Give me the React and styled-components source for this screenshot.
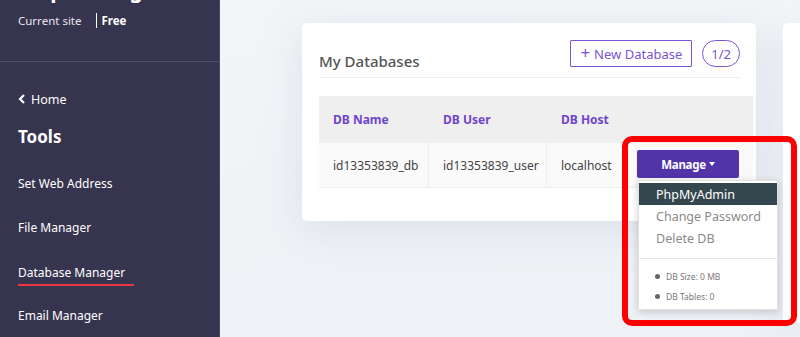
import React from "react";
import styled, { createGlobalStyle } from "styled-components";

const Global = createGlobalStyle`
  html, body { margin: 0; padding: 0; }
  body {
    width: 800px;
    height: 337px;
    overflow: hidden;
    font-family: "Noto Sans", "Open Sans", sans-serif;
    background: #eef1f5;
  }
`;

const Page = styled.div`
  display: flex;
  height: 337px;
  width: 800px;
`;

const Sidebar = styled.aside`
  width: 219px;
  flex: none;
  background: #37344f;
  border-right: 1px solid #4a4763;
  color: #fff;
  overflow: hidden;
`;

const SiteBlock = styled.div`
  display: flow-root;
  padding: 0 18px;
  height: 62px;
  border-bottom: 1px solid #4b5065;
  box-sizing: border-box;
`;

const SiteName = styled.div`
  font-size: 21px;
  font-weight: 700;
  line-height: 22px;
  margin-top: -21px;
  white-space: nowrap;
`;

const SiteMeta = styled.div`
  font-size: 11.5px;
  color: #e6e6ee;
  line-height: 16px;
  margin-top: 12px;

  b {
    color: #fff;
    margin-left: 12px;
    padding-left: 4px;
    border-left: 1.5px solid #fff;
  }
`;

const Nav = styled.nav`
  padding: 28px 18px 0;
`;

const HomeLink = styled.div`
  font-size: 12.5px;
  display: flex;
  align-items: center;
  gap: 5px;
  height: 18px;
  margin-bottom: 17px;
`;

const ToolsTitle = styled.div`
  font-size: 17px;
  font-weight: 700;
  height: 24px;
  margin-bottom: 15px;
`;

const NavItem = styled.div`
  font-size: 12px;
  height: 44px;
  display: flex;
  align-items: center;

  span {
    padding-bottom: 3px;
    border-bottom: 2px solid ${(p) => (p.$active ? "#e8363c" : "transparent")};
    margin-top: ${(p) => (p.$active ? "2px" : "0")};
    padding-right: ${(p) => (p.$active ? "9px" : "0")};
  }
`;

const Main = styled.main`
  flex: 1;
  display: flex;
  gap: 27px;
  padding: 23px 0 0 82px;
  background: linear-gradient(180deg, #f3f5f8 0%, #eef1f5 100%);
  position: relative;
  overflow: hidden;
`;

const Card = styled.section`
  width: 454px;
  height: 198px;
  flex: none;
  background: #fff;
  border-radius: 5px;
  box-shadow: 0 8px 40px rgba(160, 170, 195, 0.25);
  padding: 17px 3px 0 17px;
  box-sizing: border-box;
`;

const SideCard = styled.div`
  flex: 1;
  height: 300px;
  background: #fff;
  border-radius: 5px 0 0 5px;
  box-shadow: 0 8px 40px rgba(160, 170, 195, 0.25);
`;

const CardHead = styled.div`
  display: flex;
  align-items: center;
  justify-content: space-between;
  width: 421px;
  height: 37px;
  border-bottom: 1px solid #ececec;
`;

const Title = styled.h2`
  margin: 5px 0 0;
  font-size: 15px;
  font-weight: 500;
  color: #555;
`;

const HeadActions = styled.div`
  display: flex;
  gap: 10px;
  align-items: center;
  margin-top: -10px;
`;

const OutlineButton = styled.button`
  font-family: inherit;
  height: 27px;
  padding: 0 ${(p) => (p.$pill ? "8px" : "9px")};
  border: 1px solid #7b55d1;
  background: #fff;
  color: #7b55d1;
  font-size: 13px;
  border-radius: ${(p) => (p.$pill ? "14px" : "1px")};
  display: flex;
  align-items: center;
  gap: 4px;
`;

const Plus = styled.span`
  font-size: 17px;
  line-height: 1;
  margin-top: -2px;
`;

const Table = styled.div`
  margin-top: 18px;
  width: 434px;
  display: grid;
  grid-template-columns: 110px 118px 90px 116px;
`;

const HeadCell = styled.div`
  background: #efefef;
  height: 47px;
  display: flex;
  align-items: center;
  padding-left: 14px;
  font-size: 12px;
  font-weight: 700;
  color: #7045cc;
`;

const Cell = styled.div`
  background: #fafafa;
  height: 44px;
  display: flex;
  align-items: center;
  padding-left: 14px;
  font-size: 12px;
  color: #444;
  border-right: 1px solid #eeeeee;
  border-bottom: 1px solid #eeeeee;
  ${(p) => p.$last && "border-right: none; padding-left: 0;"}
`;

const ManageWrap = styled.div`
  position: relative;
  width: 102px;
  margin-top: -2px;
`;

const ManageButton = styled.button`
  font-family: inherit;
  width: 102px;
  height: 28px;
  border: none;
  border-radius: 2px;
  background: #5233a8;
  color: #fff;
  font-weight: 700;
  font-size: 11.5px;
  display: flex;
  align-items: center;
  justify-content: center;
  gap: 3px;
  letter-spacing: -0.3px;
`;

const Caret = styled.span`
  width: 0;
  height: 0;
  border-left: 3.5px solid transparent;
  border-right: 3.5px solid transparent;
  border-top: 4px solid #fff;
`;

const Menu = styled.div`
  position: absolute;
  top: 30px;
  left: 1px;
  width: 138px;
  background: #fff;
  border: 1px solid #e2e2e2;
  box-shadow: 0 2px 8px rgba(0, 0, 0, 0.18);
  padding-top: 2px;
  z-index: 2;
`;

const MenuItem = styled.div`
  height: 22px;
  display: flex;
  align-items: center;
  padding-left: 17px;
  font-size: 12.5px;
  color: ${(p) => (p.$active ? "#fff" : "#8a8a8a")};
  background: ${(p) => (p.$active ? "#35474e" : "transparent")};
`;

const MenuDivider = styled.div`
  margin-top: 9px;
  border-top: 1px solid #e6e6e6;
  padding: 10px 0 6px 16px;
  display: flex;
  flex-direction: column;
  gap: 6px;
`;

const Stat = styled.div`
  font-size: 8.5px;
  color: #777;
  display: flex;
  align-items: center;
  gap: 6px;
  height: 14px;

  &::before {
    content: "";
    width: 5px;
    height: 5px;
    border-radius: 50%;
    background: #666;
  }
`;

const Highlight = styled.div`
  position: absolute;
  left: 402px;
  top: 136px;
  width: 163px;
  height: 178px;
  border: 6px solid #ff0000;
  border-radius: 10px;
  pointer-events: none;
  z-index: 3;
`;

const navItems = ["Set Web Address", "File Manager", "Database Manager", "Email Manager"];

export default function App() {
  return (
    <>
      <Global />
      <Page>
        <Sidebar>
          <SiteBlock>
            <SiteName>Empire blog</SiteName>
            <SiteMeta>
              Current site <b>Free</b>
            </SiteMeta>
          </SiteBlock>
          <Nav>
            <HomeLink>
              <svg width="8" height="10" viewBox="0 0 8 10">
                <path d="M6 1 L2 5 L6 9" stroke="#fff" strokeWidth="2.2" fill="none" />
              </svg>
              Home
            </HomeLink>
            <ToolsTitle>Tools</ToolsTitle>
            {navItems.map((item) => (
              <NavItem key={item} $active={item === "Database Manager"}>
                <span>{item}</span>
              </NavItem>
            ))}
          </Nav>
        </Sidebar>
        <Main>
          <Card>
            <CardHead>
              <Title>My Databases</Title>
              <HeadActions>
                <OutlineButton>
                  <Plus>+</Plus> New Database
                </OutlineButton>
                <OutlineButton $pill>1/2</OutlineButton>
              </HeadActions>
            </CardHead>
            <Table>
              <HeadCell>DB Name</HeadCell>
              <HeadCell>DB User</HeadCell>
              <HeadCell>DB Host</HeadCell>
              <HeadCell />
              <Cell>id13353839_db</Cell>
              <Cell>id13353839_user</Cell>
              <Cell>localhost</Cell>
              <Cell $last>
                <ManageWrap>
                  <ManageButton>
                    Manage <Caret />
                  </ManageButton>
                  <Menu>
                    <MenuItem $active>PhpMyAdmin</MenuItem>
                    <MenuItem>Change Password</MenuItem>
                    <MenuItem>Delete DB</MenuItem>
                    <MenuDivider>
                      <Stat>DB Size: 0 MB</Stat>
                      <Stat>DB Tables: 0</Stat>
                    </MenuDivider>
                  </Menu>
                </ManageWrap>
              </Cell>
            </Table>
          </Card>
          <SideCard />
          <Highlight />
        </Main>
      </Page>
    </>
  );
}
